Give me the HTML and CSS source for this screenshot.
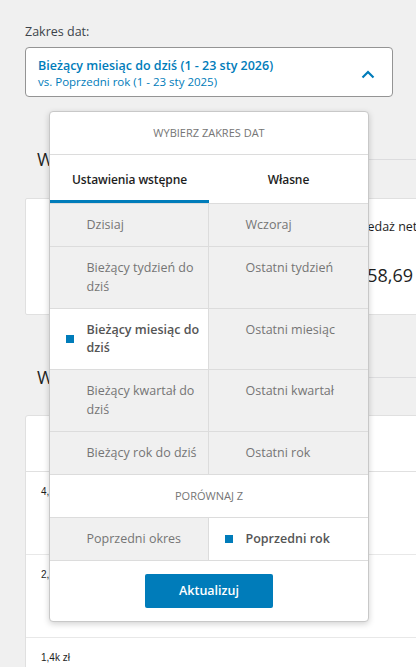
FILE: index.html
```html
<!DOCTYPE html>
<html lang="pl">
<head>
<meta charset="utf-8">
<title>Zakres dat</title>
<link rel="stylesheet" href="styles.css">
</head>
<body>
<div class="page">
  <div class="filter">
    <div class="filter-label">Zakres dat:</div>
    <div class="date-wrap">
      <button class="date-button" type="button">
        <span class="date-text">
          <span class="date-main">Bieżący miesiąc do dziś (1 - 23 sty 2026)</span>
          <span class="date-compare">vs. Poprzedni rok (1 - 23 sty 2025)</span>
        </span>
        <svg class="chevron" width="14" height="9" viewBox="0 0 14 9" aria-hidden="true"><polyline points="1.5,7.5 7,2 12.5,7.5" fill="none" stroke="#007cba" stroke-width="2.2"/></svg>
      </button>
      <div class="popover">
        <div class="pop-head">Wybierz zakres dat</div>
        <div class="tabs">
          <div class="tab active">Ustawienia wstępne</div>
          <div class="tab">Własne</div>
        </div>
        <div class="grid">
          <div class="cell"><span class="mark"></span><span class="cell-text">Dzisiaj</span></div>
          <div class="cell"><span class="mark"></span><span class="cell-text">Wczoraj</span></div>
          <div class="cell"><span class="mark"></span><span class="cell-text">Bieżący tydzień do dziś</span></div>
          <div class="cell"><span class="mark"></span><span class="cell-text">Ostatni tydzień</span></div>
          <div class="cell selected"><span class="mark"></span><span class="cell-text">Bieżący miesiąc do dziś</span></div>
          <div class="cell"><span class="mark"></span><span class="cell-text">Ostatni miesiąc</span></div>
          <div class="cell"><span class="mark"></span><span class="cell-text">Bieżący kwartał do dziś</span></div>
          <div class="cell"><span class="mark"></span><span class="cell-text">Ostatni kwartał</span></div>
          <div class="cell"><span class="mark"></span><span class="cell-text">Bieżący rok do dziś</span></div>
          <div class="cell"><span class="mark"></span><span class="cell-text">Ostatni rok</span></div>
        </div>
        <div class="pop-sub">Porównaj z</div>
        <div class="grid">
          <div class="cell"><span class="mark"></span><span class="cell-text">Poprzedni okres</span></div>
          <div class="cell selected"><span class="mark"></span><span class="cell-text">Poprzedni rok</span></div>
        </div>
        <div class="pop-foot">
          <button class="update" type="button">Aktualizuj</button>
        </div>
      </div>
    </div>
  </div>

  <section class="section">
    <div class="section-header">
      <h2 class="section-title">Wydajność</h2>
      <div class="section-line"></div>
    </div>
    <div class="summary-card">
      <div class="summary-item">
        <div class="summary-label">Sprzedaż brutto</div>
        <div class="summary-value">1 412,44 zł</div>
      </div>
      <div class="summary-item">
        <div class="summary-label">Sprzedaż netto</div>
        <div class="summary-value">1 258,69 zł</div>
      </div>
    </div>
  </section>

  <section class="section">
    <div class="section-header">
      <h2 class="section-title">Wykresy</h2>
      <div class="section-line"></div>
    </div>
    <div class="chart-card">
      <div class="chart-head"></div>
      <div class="chart-row"><span class="axis-label">4,2k zł</span></div>
      <div class="chart-row"><span class="axis-label">2,8k zł</span></div>
      <div class="chart-row"><span class="axis-label">1,4k zł</span></div>
    </div>
  </section>
</div>
</body>
</html>
```

FILE: styles.css
```css
html, body {
  margin: 0;
  height: 100%;
  overflow: hidden;
  background: #f0f0f0;
}

body {
  font-family: "Open Sans", "Noto Sans", sans-serif;
  color: #1e1e1e;
}

.page {
  padding: 23px 23px 0 25px;
}

.filter-label {
  font-size: 12.5px;
  line-height: 18px;
  color: #3c434a;
  margin-bottom: 6px;
}

.date-wrap {
  position: relative;
}

.date-button {
  display: flex;
  align-items: flex-start;
  justify-content: space-between;
  width: 100%;
  box-sizing: border-box;
  height: 50px;
  padding: 10px 17px 7px 12px;
  margin: 0;
  background: #fff;
  border: 1px solid #949494;
  border-radius: 4px;
  font-family: inherit;
  text-align: left;
}

.date-text {
  display: flex;
  flex-direction: column;
}

.date-main {
  font-size: 12.5px;
  line-height: 16px;
  font-weight: 600;
  color: #007cba;
}

.date-compare {
  font-size: 11.5px;
  line-height: 15px;
  color: #007cba;
}

.chevron {
  margin-top: 12px;
}

.popover {
  position: absolute;
  top: calc(100% + 14px);
  left: 24px;
  right: 24px;
  z-index: 10;
  background: #fff;
  border: 1px solid #c8c8c8;
  border-radius: 4px;
  box-shadow: 0 2px 6px rgba(0, 0, 0, 0.18);
  overflow: hidden;
}

.pop-head,
.pop-sub {
  height: 42px;
  line-height: 42px;
  text-align: center;
  font-size: 11px;
  text-transform: uppercase;
  color: #757575;
}

.pop-head {
  border-bottom: 1px solid #dcdcdc;
}

.pop-sub {
  border-top: 1px solid #dcdcdc;
}

.tabs {
  display: grid;
  grid-template-columns: 1fr 1fr;
}

.tab {
  height: 48px;
  box-sizing: border-box;
  padding-top: 4px;
  line-height: 41px;
  border-bottom: 3px solid transparent;
  text-align: center;
  font-size: 12px;
  font-weight: 600;
  letter-spacing: -0.1px;
  color: #1e1e1e;
}

.tab.active {
  border-bottom-color: #007cba;
}

.grid {
  display: grid;
  grid-template-columns: 1fr 1fr;
}

.cell {
  display: flex;
  align-items: center;
  padding: 12px 4px 11.5px 16px;
  background: #f0f0f0;
  border-top: 1px solid #dcdcdc;
  font-size: 12.5px;
  line-height: 18.5px;
  color: #757575;
}

.cell:nth-child(odd) {
  border-right: 1px solid #dcdcdc;
}

.cell.selected {
  background: #fff;
  color: #555;
  font-weight: 600;
}

.mark {
  flex: none;
  width: 8px;
  height: 8px;
  margin-right: 12.5px;
}

.cell.selected .mark {
  background: #007cba;
}

.cell-text {
  align-self: flex-start;
}

.pop-foot {
  display: flex;
  justify-content: center;
  padding: 13px 0;
  border-top: 1px solid #dcdcdc;
}

.update {
  width: 128px;
  height: 34px;
  margin: 0;
  border: 0;
  border-radius: 2px;
  background: #007cba;
  color: #fff;
  font-family: inherit;
  font-size: 12.5px;
  font-weight: 600;
}

.section-header {
  display: flex;
  align-items: center;
  height: 40px;
  margin: 42px -40px 18px 0;
  padding-left: 12px;
}

.section:first-of-type .section-header {
  margin-bottom: 19px;
}

.section-title {
  margin: 0 12px 0 0;
  font-size: 18px;
  font-weight: 400;
  line-height: 24px;
  color: #1e1e1e;
}

.section-line {
  flex: 1;
  height: 1px;
  background: #dcdcde;
}

.summary-card {
  display: flex;
  margin-right: -60px;
  background: #fff;
  border: 1px solid #e0e0e0;
  border-radius: 2px;
}

.summary-item {
  flex: none;
  width: 268px;
  padding: 19px 0 26px 24px;
}

.summary-label {
  font-size: 12.5px;
  line-height: 18px;
  color: #1e1e1e;
}

.summary-value {
  margin-top: 26px;
  font-size: 18px;
  line-height: 26px;
  color: #1e1e1e;
}

.chart-card {
  margin-right: -60px;
  background: #fff;
  border: 1px solid #e0e0e0;
  border-radius: 3px;
}

.chart-head {
  height: 55px;
  border-bottom: 1px solid #e0e0e0;
}

.chart-row {
  height: 83px;
  padding: 6px 0 0 15px;
  box-sizing: border-box;
  border-bottom: 1px solid #e8e8e8;
}

.chart-row:last-child {
  height: 120px;
}

.axis-label {
  font-family: "Liberation Sans", Arial, sans-serif;
  font-size: 10px;
  line-height: 12px;
  color: #1e1e1e;
}
```
